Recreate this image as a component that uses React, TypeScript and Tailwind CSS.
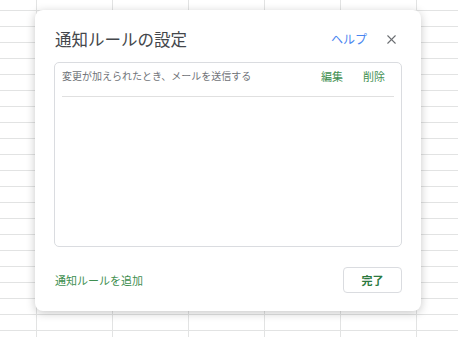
import { X } from "lucide-react";

const font = { fontFamily: '"Noto Sans CJK JP", "Noto Sans", sans-serif' };

function SheetGrid() {
  const rows = Array.from({ length: 22 });
  const cols = [0, 1, 2, 3, 4, 5, 6];
  return (
    <div className="flex flex-col">
      {rows.map((_, r) => (
        <div key={r} className="flex">
          {cols.map((c) => (
            <div
              key={c}
              className={`border-r border-b border-[#e2e3e3] ${r === 0 ? "h-[11px]" : "h-[16px]"} ${c === 0 ? "w-[37px]" : "w-[76px]"} shrink-0`}
            />
          ))}
        </div>
      ))}
    </div>
  );
}

export default function App() {
  return (
    <div className="relative w-[458px] h-[337px] overflow-hidden bg-white" style={font}>
      <SheetGrid />

      {/* Dialog */}
      <div className="absolute left-[35px] top-[10px] w-[386px] h-[301px] bg-white rounded-[8px] shadow-[0_2px_10px_rgba(0,0,0,0.22)] flex flex-col pt-[17px] px-[19px] pb-[18px]">
        <div className="flex items-center h-[24px] pl-[1px]">
          <h2 className="text-[16.5px] text-[#44474b] leading-[24px] flex-1">通知ルールの設定</h2>
          <button className="text-[12px] text-[#4a86f0] leading-none mr-[17px]">ヘルプ</button>
          <button className="text-[#6b6e72] mr-[3px]">
            <X size={15} strokeWidth={1.7} />
          </button>
        </div>

        <div className="mt-[11px] h-[185px] border border-[#dadce0] rounded-[5px] px-[7px]">
          <div className="flex items-start justify-between h-[34px] pt-[6px] border-b border-[#e0e0e0]">
            <span className="text-[10px] leading-[14px] text-[#6f7378]">
              変更が加えられたとき、メールを送信する
            </span>
            <div className="flex gap-[20px] pr-[9px] text-[11px] leading-[14px] text-[#3f8f51]">
              <button>編集</button>
              <button>削除</button>
            </div>
          </div>
        </div>

        <div className="mt-[20px] flex items-center justify-between">
          <button className="text-[11px] text-[#3f8f51] pl-[1px]">通知ルールを追加</button>
          <button className="w-[59px] h-[26px] border border-[#dadce0] rounded-[4px] text-[11px] font-semibold text-[#2d7a40]">
            完了
          </button>
        </div>
      </div>
    </div>
  );
}
